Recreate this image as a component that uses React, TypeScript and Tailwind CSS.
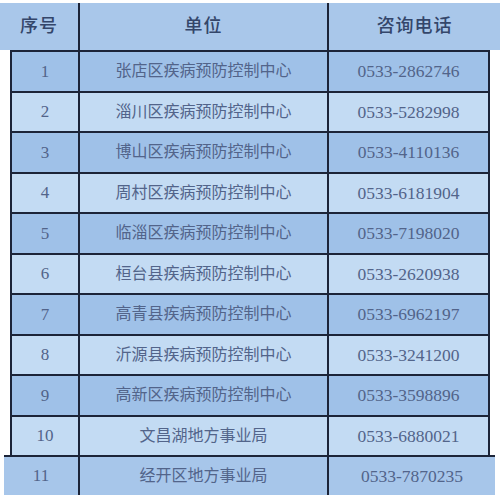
const rows = [
  ["1", "张店区疾病预防控制中心", "0533-2862746"],
  ["2", "淄川区疾病预防控制中心", "0533-5282998"],
  ["3", "博山区疾病预防控制中心", "0533-4110136"],
  ["4", "周村区疾病预防控制中心", "0533-6181904"],
  ["5", "临淄区疾病预防控制中心", "0533-7198020"],
  ["6", "桓台县疾病预防控制中心", "0533-2620938"],
  ["7", "高青县疾病预防控制中心", "0533-6962197"],
  ["8", "沂源县疾病预防控制中心", "0533-3241200"],
  ["9", "高新区疾病预防控制中心", "0533-3598896"],
  ["10", "文昌湖地方事业局", "0533-6880021"],
];

const font = { fontFamily: '"Liberation Serif", "Noto Sans CJK SC", serif' };

export default function App() {
  return (
    <div className="w-[500px] h-[501px] bg-white pt-[3px] text-[#52648a]" style={font}>
      {/* Header */}
      <div className="flex h-[47px] bg-[#a9c7ea] text-[18px] text-[#34466a] font-medium">
        <div className="w-[80px] border-r-2 border-[#1c2438] flex items-center justify-center tracking-wider">序号</div>
        <div className="w-[249px] border-r-2 border-[#1c2438] flex items-center justify-center tracking-wider">单位</div>
        <div className="flex-1 flex items-center justify-center tracking-wider">咨询电话</div>
      </div>

      {/* Body */}
      <div className="ml-[10px] w-[480px] border-l-2 border-r-2 border-[#1c2438]">
        {rows.map(([n, name, tel], i) => (
          <div
            key={n}
            className={
              "flex h-[40.5px] border-t-2 border-[#1c2438] text-[16px] " +
              (i % 2 === 0 ? "bg-[#9fc1e8]" : "bg-[#c3dbf3]")
            }
          >
            <div className="w-[68px] border-r-2 border-[#1c2438] flex items-center justify-center text-[17px]">{n}</div>
            <div className="w-[249px] border-r-2 border-[#1c2438] flex items-center justify-center">{name}</div>
            <div className="flex-1 flex items-center justify-center text-[17.5px]">{tel}</div>
          </div>
        ))}
      </div>

      {/* Last row */}
      <div className="flex h-[40px] ml-[4px] w-[491px] border-t-2 border-[#1c2438] bg-[#a7c6ea] text-[16px]">
        <div className="w-[76px] border-r-2 border-[#1c2438] flex items-center justify-center text-[17px]">11</div>
        <div className="w-[249px] border-r-2 border-[#1c2438] flex items-center justify-center">经开区地方事业局</div>
        <div className="flex-1 flex items-center justify-center text-[17.5px]">0533-7870235</div>
      </div>
    </div>
  );
}
